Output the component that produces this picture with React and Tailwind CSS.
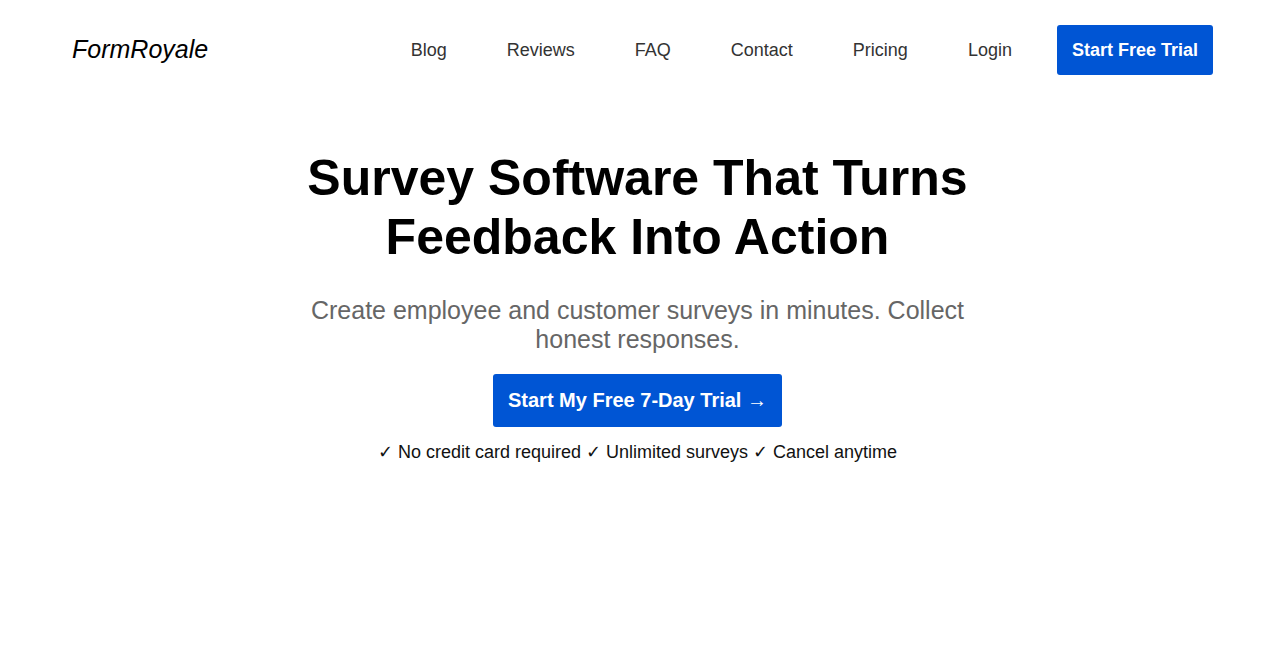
import React from 'react';

const links = ['Blog', 'Reviews', 'FAQ', 'Contact', 'Pricing', 'Login'];

const App = () => {
  return (
    <div className="min-h-screen bg-white font-['Liberation_Sans',Arial,sans-serif] text-black">
      {/* Header */}
      <header className="h-[100px] flex items-center justify-between pl-[72px] pr-[60px]">
        <div className="text-[25px] italic text-black">FormRoyale</div>
        <nav className="flex items-center">
          {links.map((link) => (
            <a key={link} href="#" className="text-[18px] text-[#333] ml-[60px] leading-[20px]">
              {link}
            </a>
          ))}
          <a
            href="#"
            className="ml-[45px] bg-[#0055d4] text-white text-[18px] font-bold leading-[20px] px-[15px] py-[15px] rounded-[3px]"
          >
            Start Free Trial
          </a>
        </nav>
      </header>

      {/* Hero */}
      <section className="flex flex-col items-center text-center pt-[49px] pl-[2px]">
        <h1 className="max-w-[700px] text-[50px] font-bold leading-[59px]">
          Survey Software That Turns Feedback Into Action
        </h1>
        <p className="max-w-[700px] mt-[29px] text-[25px] leading-[29px] text-[#666]">
          Create employee and customer surveys in minutes. Collect honest responses.
        </p>
        <a
          href="#"
          className="mt-[20px] bg-[#0055d4] text-white text-[20px] font-bold leading-[23px] px-[15px] py-[15px] rounded-[3px]"
        >
          Start My Free 7-Day Trial →
        </a>
        <p className="mt-[15px] text-[18px] leading-[21px] text-[#111]">
          ✓ No credit card required ✓ Unlimited surveys ✓ Cancel anytime
        </p>
      </section>
    </div>
  );
};

export default App;
